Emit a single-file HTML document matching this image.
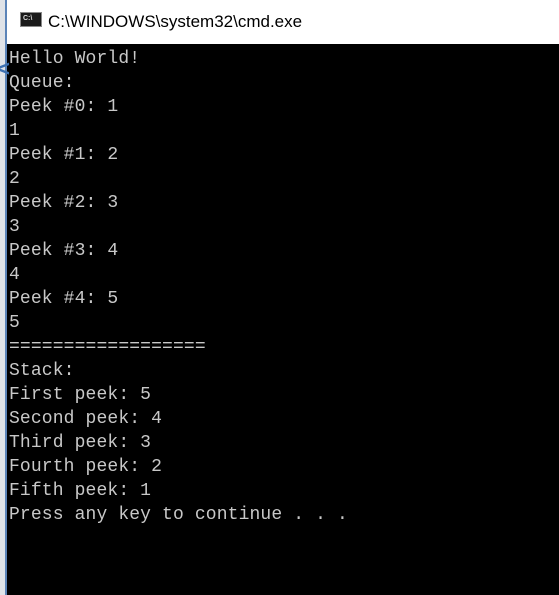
<!DOCTYPE html>
<html><head><meta charset="utf-8"><style>
html,body{margin:0;padding:0;width:559px;height:595px;overflow:hidden;background:#000}
#left{position:absolute;left:0;top:0;width:7px;height:595px;background:#dfe3e8}
#left .line{position:absolute;left:5px;top:0;width:2px;height:595px;background:#5b84b8}
#title{position:absolute;left:7px;top:0;width:552px;height:44px;background:#fff}
#icon{position:absolute;left:13px;top:12px;width:22px;height:15px;background:#1a1a1a;border:1px solid #888;box-sizing:border-box}
#icon span{position:absolute;left:2px;top:2px;font:bold 7px "Liberation Sans",sans-serif;color:#ddd;line-height:8px}
#ttext{position:absolute;left:41px;top:12px;font:17px "Liberation Sans",sans-serif;color:#000}
#con{position:absolute;left:9px;top:47px;font:18px/24px "Liberation Mono",monospace;letter-spacing:0.13px;color:#c8c8c8;white-space:pre;margin:0}
#arrow{position:absolute;left:-3px;top:56px;color:#3b6fb0;font:bold 22px "Liberation Sans",sans-serif}
</style></head><body>
<div id="left"><div class="line"></div></div>
<div id="arrow">&lt;</div>
<div id="title"><div id="icon"><span>C:\</span></div><div id="ttext">C:\WINDOWS\system32\cmd.exe</div></div>
<pre id="con">Hello World!
Queue:
Peek #0: 1
1
Peek #1: 2
2
Peek #2: 3
3
Peek #3: 4
4
Peek #4: 5
5
==================
Stack:
First peek: 5
Second peek: 4
Third peek: 3
Fourth peek: 2
Fifth peek: 1
Press any key to continue . . .</pre>
</body></html>
